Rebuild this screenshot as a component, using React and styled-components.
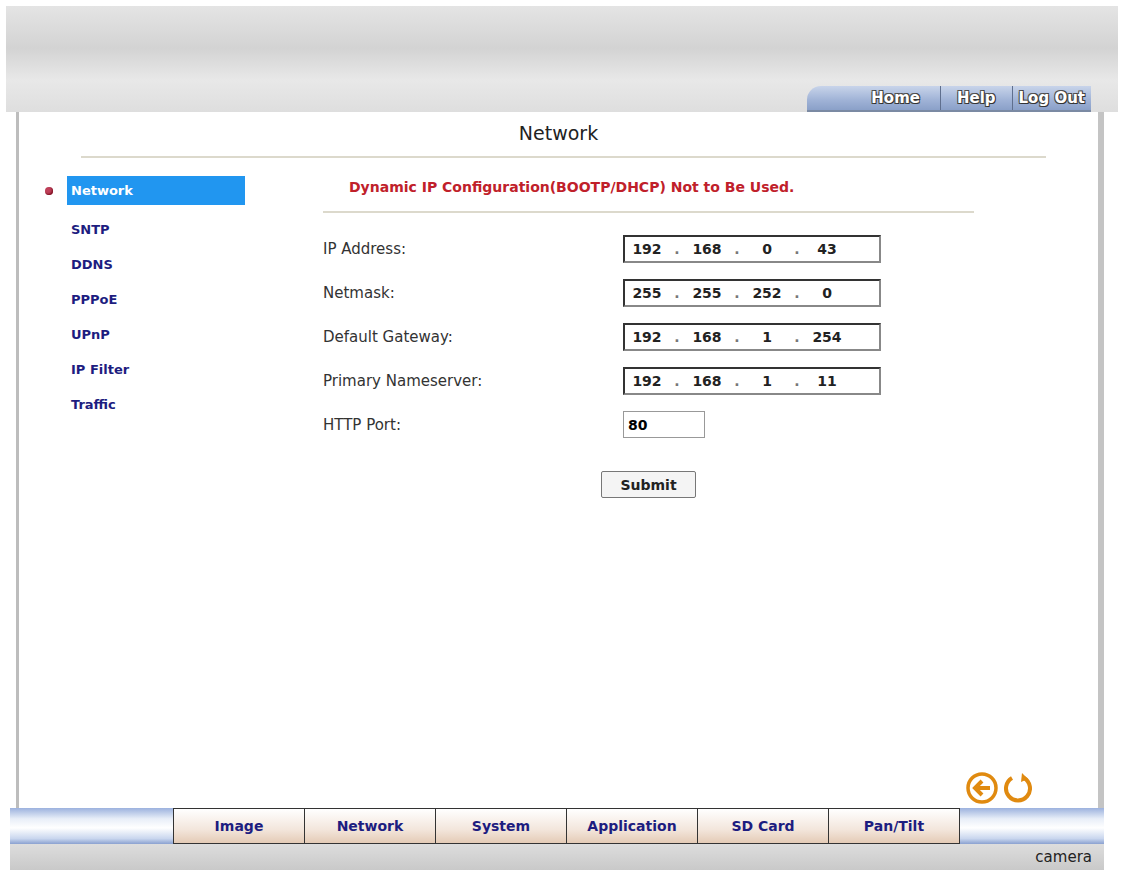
import React from "react";
import styled, { createGlobalStyle } from "styled-components";

const Global = createGlobalStyle`
  html, body { margin: 0; padding: 0; background: #fff; }
  body { font-family: Tahoma, "DejaVu Sans", Verdana, sans-serif; }
`;

const Page = styled.div`
  width: 1126px; height: 870px; padding: 6px 8px 0 6px; box-sizing: border-box;
  display: flex; flex-direction: column;
`;
const Header = styled.div`
  height: 106px; display: flex; align-items: flex-end; justify-content: flex-end;
  padding-right: 27px;
  background: linear-gradient(180deg, #e4e4e4 0%, #d3d3d3 40%, #e8e8e8 70%, #dedede 100%);
`;
const TopNav = styled.div`
  display: flex; height: 24px;
  border-radius: 14px 0 0 0; overflow: hidden;
  background: linear-gradient(180deg, #c8d4ea 0%, #9fb2d6 60%, #8aa0c8 100%);
  border-bottom: 2px solid #7b8aa3; padding-left: 44px;
`;
const TopLink = styled.div`
  padding: 0 ${p => p.$pad || 8}px; display: flex; align-items: center;
  font: bold 15px Verdana, "DejaVu Sans", sans-serif; color: #fff;
  text-shadow: 1px 1px 0 #333, -1px -1px 0 #555, 1px -1px 0 #444, -1px 1px 0 #444;
  border-left: ${p => p.$sep ? "1px solid #5f6f8e" : "none"};
`;
const Panel = styled.div`
  flex: 1; margin: 0 14px 0 10px; background: #fff;
  border-left: 3px solid #bdbdbd; border-right: 6px solid #c4c4c4;
  position: relative; display: flex; flex-direction: column;
`;
const Title = styled.div`
  text-align: center; font-size: 19px; color: #222; padding-top: 10px;
`;
const Rule = styled.div`
  height: 2px; background: #dcd9cc; margin: ${p => p.$m};
`;
const Body = styled.div`display: flex; margin-top: 18px;`;
const Side = styled.div`width: 278px; display: flex; flex-direction: column; gap: 13px; padding-left: 26px;`;
const SideItem = styled.div`
  display: flex; align-items: center; height: ${p => p.$active ? 29 : 22}px;
  font: bold 13px Tahoma, "DejaVu Sans", sans-serif; color: #1d1d80;
`;
const Bullet = styled.span`
  width: 8px; height: 8px; border-radius: 50%; background: #c0405a; margin-right: 14px;
  visibility: ${p => p.$show ? "visible" : "hidden"};
  box-shadow: inset -1px -1px 2px #7a1020;
`;
const SideLabel = styled.span`
  display: flex; align-items: center; height: 100%; padding-left: 4px;
  width: ${p => p.$active ? "174px" : "auto"};
  background: ${p => p.$active ? "#2196f0" : "transparent"};
  color: ${p => p.$active ? "#fff" : "#1d1d80"};
`;
const Main = styled.div`flex: 1; display: flex; flex-direction: column;`;
const Warn = styled.div`
  font: bold 14px Tahoma, "DejaVu Sans", sans-serif; color: #c0202a; padding-left: 26px; height: 22px; margin-top: 3px;
`;
const Form = styled.div`
  display: grid; grid-template-columns: 300px auto; row-gap: 16px; margin-top: 22px; align-items: center;
`;
const Label = styled.div`font-size: 15px; color: #333; font-family: Tahoma, "DejaVu Sans", sans-serif;`;
const IpBox = styled.div`
  width: 258px; height: 28px; border: 2px solid #333; border-right-color: #888; border-bottom-color: #888;
  display: flex; align-items: center; box-sizing: border-box;
  font: bold 14px Tahoma, "DejaVu Sans", sans-serif; color: #222;
`;
const Oct = styled.span`width: 44px; text-align: center;`;
const Dot = styled.span`width: 16px; text-align: center; color: #777;`;
const PortBox = styled.div`
  width: 82px; height: 27px; border: 1px solid #999; box-sizing: border-box;
  font: bold 14px Tahoma, "DejaVu Sans", sans-serif; display: flex; align-items: center; padding-left: 4px;
`;
const Submit = styled.button`
  align-self: flex-start; margin: 33px 0 0 278px; width: 95px; height: 27px;
  font: bold 14px Tahoma, "DejaVu Sans", sans-serif; color: #222;
  background: #f4f4f4; border: 1px solid #777; border-radius: 2px;
`;
const Icons = styled.div`position: absolute; right: 66px; bottom: 2px; display: flex; gap: 2px;`;
const TabBar = styled.div`
  height: 36px; display: flex; padding-left: 163px; margin: 0 14px 0 4px;
  background: linear-gradient(180deg, #9cb2de 0%, #e8eef8 30%, #fff 55%, #c9d6ee 85%, #8aa1d0 100%);
`;
const Tab = styled.div`
  width: 130px; display: flex; align-items: center; justify-content: center;
  font: bold 14px Tahoma, "DejaVu Sans", sans-serif; color: #1d1d80;
  background: linear-gradient(180deg, #fff 0%, #f3e6dc 60%, #e4cbb6 100%);
  border-left: 1px solid #333; border-top: 1px solid #333; border-bottom: 1px solid #333;
  &:last-child { border-right: 1px solid #333; }
`;
const Footer = styled.div`
  height: 26px; margin: 0 14px 0 4px; background: linear-gradient(180deg, #ddd, #c9c9c9);
  display: flex; justify-content: flex-end; align-items: center; padding-right: 12px;
  font: 15px Tahoma, "DejaVu Sans", sans-serif; color: #222;
`;

const rows = [
  ["IP Address:", ["192", "168", "0", "43"]],
  ["Netmask:", ["255", "255", "252", "0"]],
  ["Default Gateway:", ["192", "168", "1", "254"]],
  ["Primary Nameserver:", ["192", "168", "1", "11"]],
];
const side = ["Network", "SNTP", "DDNS", "PPPoE", "UPnP", "IP Filter", "Traffic"];
const tabs = ["Image", "Network", "System", "Application", "SD Card", "Pan/Tilt"];

export default function App() {
  return (
    <Page>
      <Global />
      <Header>
        <TopNav>
          <TopLink $pad={20}>Home</TopLink>
          <TopLink $sep $pad={16}>Help</TopLink>
          <TopLink $sep $pad={6}>Log Out</TopLink>
        </TopNav>
      </Header>
      <Panel>
        <Title>Network</Title>
        <Rule $m="12px 52px 0 62px" />
        <Body>
          <Side>
            {side.map((s, i) => (
              <SideItem key={s} $active={i === 0}>
                <Bullet $show={i === 0} />
                <SideLabel $active={i === 0}>{s}</SideLabel>
              </SideItem>
            ))}
          </Side>
          <Main>
            <Warn>Dynamic IP Configuration(BOOTP/DHCP) Not to Be Used.</Warn>
            <Rule $m="10px 124px 0 0" />
            <Form>
              {rows.map(([l, o]) => (
                <React.Fragment key={l}>
                  <Label>{l}</Label>
                  <IpBox>
                    {o.map((v, i) => (
                      <React.Fragment key={i}>
                        {i > 0 && <Dot>.</Dot>}
                        <Oct>{v}</Oct>
                      </React.Fragment>
                    ))}
                  </IpBox>
                </React.Fragment>
              ))}
              <Label>HTTP Port:</Label>
              <PortBox>80</PortBox>
            </Form>
            <Submit>Submit</Submit>
          </Main>
        </Body>
        <Icons>
          <svg width="36" height="36" viewBox="0 0 36 36">
            <circle cx="18" cy="18" r="14" fill="none" stroke="#e08a10" strokeWidth="3.5" />
            <path d="M26 18H12M18 11l-7 7 7 7" fill="none" stroke="#e08a10" strokeWidth="4" />
          </svg>
          <svg width="30" height="36" viewBox="0 0 30 36">
            <path d="M10 8A12 12 0 1 0 22 8" fill="none" stroke="#e08a10" strokeWidth="4" />
            <path d="M20 3l6 6-7 3z" fill="#e08a10" />
          </svg>
        </Icons>
      </Panel>
      <TabBar>
        {tabs.map(t => <Tab key={t}>{t}</Tab>)}
      </TabBar>
      <Footer>camera</Footer>
    </Page>
  );
}
